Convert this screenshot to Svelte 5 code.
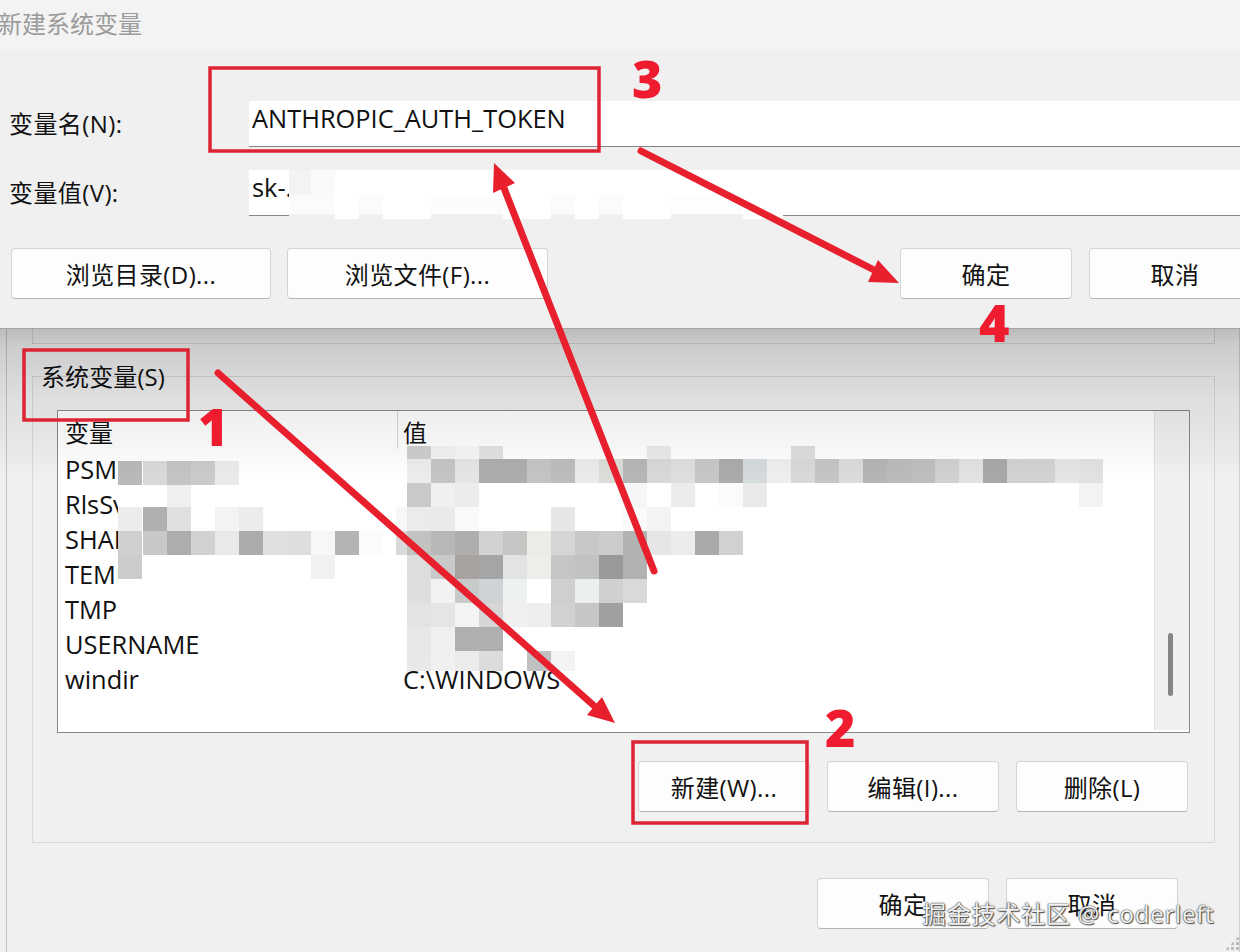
<script>
  // mosaic cells: y, height, "x:color" (each cell 24px wide unless x has a /w)
  const blur = [
    [170, 25, '289/22:f3f3f3 311/24:fafafa'],
    [214, 5, '289/494:f0f0f0'],
    [195, 24, '335:fff 383/48:fff 503/48:fff 575:fff 623/48:fff 743/40:fff'],
    [195, 19, '289/46:fbfbfb 359/24:fbfbfb 431/72:fcfcfc 551/24:fbfbfb 599/24:fbfbfb 671/72:fdfdfd'],
    [461, 134, '118/267:fff'],
    [461, 24, '118:b9b9b7 143:d9d9d9 167:c4c4c4 191:cbcbcb 215:ebebeb'],
    [485, 22, '167:efefef'],
    [507, 24, '118:ececec 143:b0b0b0 167:e0e0e0 215:f3f3f3 239:ececec'],
    [531, 24, '118:cfcfcf 143:c8c8c8 167:adadab 191:d2d2d2 215:e9e9e9 239:acacac 263:dfe0e0 287:dedede 311:f7f7f7 335:b4b4b4 359:fbfbfb'],
    [555, 24, '118:cccccc 311:f1f1f1'],
    [446, 13, '407:cfcfcf 431:f3f3f3 455:f7f7f7 479:e3e3e3 647:eaeaea 791:dedede'],
    [459, 24, '407:ececec 431:c4c4c4 455:e5e5e5 479:adadad 503:adadad 527:c4c4c4 551:bdbdbb 575:ebebeb 599:dcdcd8 623:b6b6b6 647:d8d8d8 671:dedede 695:c6c8c8 719:ababab 743:d5dadd 767:eeeeee 791:d9d9d9 815:c5c5c3 839:dbdbdb 863:b5b5b5 887:b9bbbd 911:bfbebc 935:cfd0d2 959:e2e2e2 983:a9a8a6 1007:d1d3d3 1031:d2d2d2 1055:e5e5e5 1079:e2e2e2'],
    [483, 24, '407:c9c9c9 431:f0f0f0 455:ececec 623:f6f6f6 671:ececec 719:fbfbfb 743:e9e9e9 1079:f3f3f3'],
    [507, 24, '396/11:f7f7f7 407:ebebeb 431:e8eaeb 455:fafafa 551:e6e6e6 623:fafafa 647:f3f3f3'],
    [531, 24, '396/11:d9d9d9 407:c2c2c0 431:b8b8b6 455:aeaeae 479:d2d2d2 503:c8c6c4 527:ecebe7 551:d5d5d3 575:c8c8c8 599:cccccc 623:b2b2b2 647:e6e6e6 671:ececec 695:a9abab 719:cfd1d3'],
    [555, 24, '407:dddddd 431:c9c9c9 455:a6a3a0 479:a5a5a5 503:e3e3e3 527:eeeeea 551:c3c5c7 575:c1c3c3 599:999999 623:b2b2b2'],
    [579, 24, '407:dedede 431:f1f2f3 455:c8caca 479:cfd3d5 503:eef1f2 551:cfcfcd 575:ecefef 599:cfd0d0 623:d9d9d9'],
    [603, 24, '407:e3e3e3 431:e5e5e5 455:f3f3f3 479:d6d6d6 503:f0f0f0 527:eeeeee 551:d3d1cf 575:c6c6c6 599:a0a0a0'],
    [627, 24, '407:e8e8e8 431:efefef 455:adafb0 479:adafb0'],
    [651, 20, '407:e8e8e8 431:f0f0f0 455:ebebeb 479:dcdcdc 527:c0c1c3 551:f3f3f3']
  ];

  const cells = blur.flatMap(([y, h, s]) =>
    s.split(' ').map((c) => {
      const [pos, color] = c.split(':');
      const [x, w] = pos.split('/');
      return { x: +x, y, w: +(w || 24), h, color: '#' + color };
    })
  );

  const rows = [
    ['PSM', ''],
    ['RlsSv', ''],
    ['SHAR', ''],
    ['TEMP', ''],
    ['TMP', ''],
    ['USERNAME', ''],
    ['windir', 'C:\\WINDOWS']
  ];
</script>

<div class="page">
  <section class="dialog">
    <div class="titlebar">新建系统变量</div>
    <div class="form">
      <label for="var-name">变量名(N):</label>
      <input id="var-name" value="ANTHROPIC_AUTH_TOKEN" />
      <label for="var-value">变量值(V):</label>
      <input id="var-value" value="sk-." />
    </div>
    <div class="dialog-actions">
      <button class="wide">浏览目录(D)...</button>
      <button class="wide">浏览文件(F)...</button>
      <button class="ok">确定</button>
      <button>取消</button>
    </div>
  </section>

  <section class="window">
    <div class="group-stub"></div>
    <div class="group">
      <div class="group-title">系统变量(S)</div>
      <div class="list">
        <div class="list-head">
          <span class="col-name">变量</span>
          <span class="col-value">值</span>
        </div>
        {#each rows as [name, value]}
          <div class="list-row">
            <span class="col-name">{name}</span>
            <span class="col-value">{value}</span>
          </div>
        {/each}
        <div class="scrollbar"><div class="thumb"></div></div>
      </div>
      <div class="group-actions">
        <button>新建(W)...</button>
        <button>编辑(I)...</button>
        <button>删除(L)</button>
      </div>
    </div>
    <div class="window-actions">
      <button>确定</button>
      <button>取消</button>
    </div>
  </section>

  <svg class="layer" viewBox="0 0 1240 952" aria-hidden="true">
    {#each cells as c}
      <rect x={c.x} y={c.y} width={c.w} height={c.h} fill={c.color} />
    {/each}
  </svg>

  <div class="shade"></div>

  <svg class="layer" viewBox="0 0 1240 952">
    <g fill="none" stroke="#dd2433" stroke-width="3.5">
      <rect x="210" y="68" width="389" height="83" />
      <rect x="24" y="350" width="164" height="70" />
      <rect x="633" y="742" width="174" height="81" />
    </g>
    <g stroke="#e8202e" stroke-width="7" stroke-linecap="round" fill="#e8202e">
      <line x1="218" y1="373" x2="600" y2="711" />
      <polygon points="615,723 602,697 587,715" stroke="none" />
      <line x1="654" y1="571" x2="502" y2="183" />
      <polygon points="494,163 515,183 493,193" stroke="none" />
      <line x1="641" y1="151" x2="878" y2="272" />
      <polygon points="899,283 878,260 868,282" stroke="none" />
    </g>
    <g class="digits">
      <text x="632" y="98">3</text>
      <text x="198" y="446">1</text>
      <text x="825" y="747">2</text>
      <text x="979" y="342">4</text>
    </g>
  </svg>

  <div class="grip"></div>
  <div class="watermark">掘金技术社区 @ coderleft</div>
</div>

<style>
  :global(body) {
    margin: 0;
    background: #f0f0f0;
  }

  .page {
    position: relative;
    width: 1240px;
    height: 952px;
    overflow: hidden;
    background: #f0f0f0;
    color: #111;
    font-family: "Open Sans", "Noto Sans CJK SC", sans-serif;
    font-size: 24px;
  }

  button,
  input {
    font: inherit;
    color: inherit;
  }

  button {
    flex: none;
    box-sizing: border-box;
    width: 172px;
    height: 51px;
    padding: 0;
    letter-spacing: 0.4px;
    background: #fdfdfd;
    border: 1px solid #d4d4d4;
    border-bottom-color: #b4b4b4;
    border-radius: 4px;
  }

  /* top dialog */
  .dialog {
    box-sizing: border-box;
    height: 329px;
    background: #f0f0f0;
    border-bottom: 1px solid #a6a6a6;
    overflow: hidden;
  }

  .titlebar {
    height: 50px;
    line-height: 48px;
    margin-left: -2px;
    color: #9b9b9b;
    background: #f3f3f3;
  }

  .form {
    display: grid;
    grid-template-columns: 249px 1fr;
    row-gap: 23px;
    padding-top: 51px;
    align-items: center;
  }

  .form label {
    padding-left: 9px;
    margin-top: -4px;
    letter-spacing: 0.4px;
  }

  .form input {
    box-sizing: border-box;
    width: 100%;
    height: 46px;
    padding: 0 3px 11px;
    font-size: 25.4px;
    background: #fff;
    border: 0;
    border-bottom: 1px solid #848484;
    outline: 0;
    border-radius: 0;
  }

  .dialog-actions {
    display: flex;
    gap: 16px;
    margin-top: 32px;
    padding-left: 11px;
    width: 1400px;
  }

  .dialog-actions .wide {
    width: 260px;
  }

  .dialog-actions .wide + .wide {
    width: 261px;
  }

  .dialog-actions .ok {
    margin-left: 336px;
    margin-right: 1px;
  }

  /* window behind the dialog */
  .window {
    margin-left: 6px;
    height: 623px;
    border-left: 1px solid #c4c4c4;
    border-right: 1px solid #cfcfcf;
  }

  .group-stub {
    box-sizing: border-box;
    height: 15px;
    margin-left: 25px;
    width: 1183px;
    border: 1px solid #d4d4d4;
    border-top: 0;
  }

  .group {
    box-sizing: border-box;
    height: 467px;
    width: 1183px;
    margin: 32px 0 0 25px;
    padding: 0 24px;
    border: 1px solid #d8d8d8;
  }

  .group-title {
    width: max-content;
    height: 35px;
    margin: 0 0 -2px -16px;
    line-height: 0;
    letter-spacing: 0.1px;
  }

  .list {
    position: relative;
    box-sizing: border-box;
    width: 1133px;
    height: 323px;
    background: #fff;
    border: 1px solid #888;
    overflow: hidden;
  }

  .list-head,
  .list-row {
    display: flex;
    height: 35px;
    line-height: 35px;
    white-space: nowrap;
  }

  .list-row {
    font-size: 25.4px;
  }

  .list-head {
    height: 41px;
    line-height: 44px;
  }

  .col-name {
    box-sizing: border-box;
    width: 339px;
    padding-left: 7px;
  }

  .col-value {
    padding-left: 6px;
  }

  .list-head .col-value {
    flex: 1;
    height: 38px;
    padding-left: 5px;
    border-left: 1px solid #d8d8d8;
  }

  .scrollbar {
    position: absolute;
    top: 0;
    right: 0;
    bottom: 2px;
    width: 34px;
    background: #f0f0f0;
    border-left: 1px solid #e2e2e2;
  }

  .thumb {
    position: absolute;
    top: 222px;
    left: 13px;
    width: 5px;
    height: 63px;
    border-radius: 3px;
    background: #858585;
  }

  .group-actions {
    display: flex;
    justify-content: flex-end;
    gap: 17px;
    width: 1131px;
    margin-top: 28px;
  }

  .window-actions {
    display: flex;
    justify-content: flex-end;
    gap: 17px;
    width: 1171px;
    margin-top: 35px;
  }

  /* overlays */
  .layer {
    position: absolute;
    inset: 0;
    width: 1240px;
    height: 952px;
    pointer-events: none;
  }

  .shade {
    position: absolute;
    top: 329px;
    left: 0;
    width: 100%;
    height: 150px;
    pointer-events: none;
    background: linear-gradient(
      rgba(0, 0, 0, 0.22) 0,
      rgba(0, 0, 0, 0.15) 17px,
      rgba(0, 0, 0, 0.07) 72px,
      rgba(0, 0, 0, 0.06) 90px,
      rgba(0, 0, 0, 0.03) 122px,
      rgba(0, 0, 0, 0) 150px
    );
  }

  .digits {
    fill: #ee1c2e;
    font-family: "Open Sans", sans-serif;
    font-weight: 800;
    font-size: 52px;
  }

  .grip {
    position: absolute;
    right: 1px;
    bottom: 2px;
    width: 14px;
    height: 14px;
    background: radial-gradient(circle, #bcbcbc 1.5px, transparent 1.6px) 0 0 / 5px 5px;
    clip-path: polygon(100% 0, 100% 100%, 0 100%);
  }

  .watermark {
    position: absolute;
    left: 922px;
    top: 895px;
    white-space: nowrap;
    font-size: 24px;
    letter-spacing: 0.8px;
    color: #f2f2f2;
    text-shadow: 0 0 1px #333, 0 0 2px #555, 1px 1px 1px #555;
  }
</style>
